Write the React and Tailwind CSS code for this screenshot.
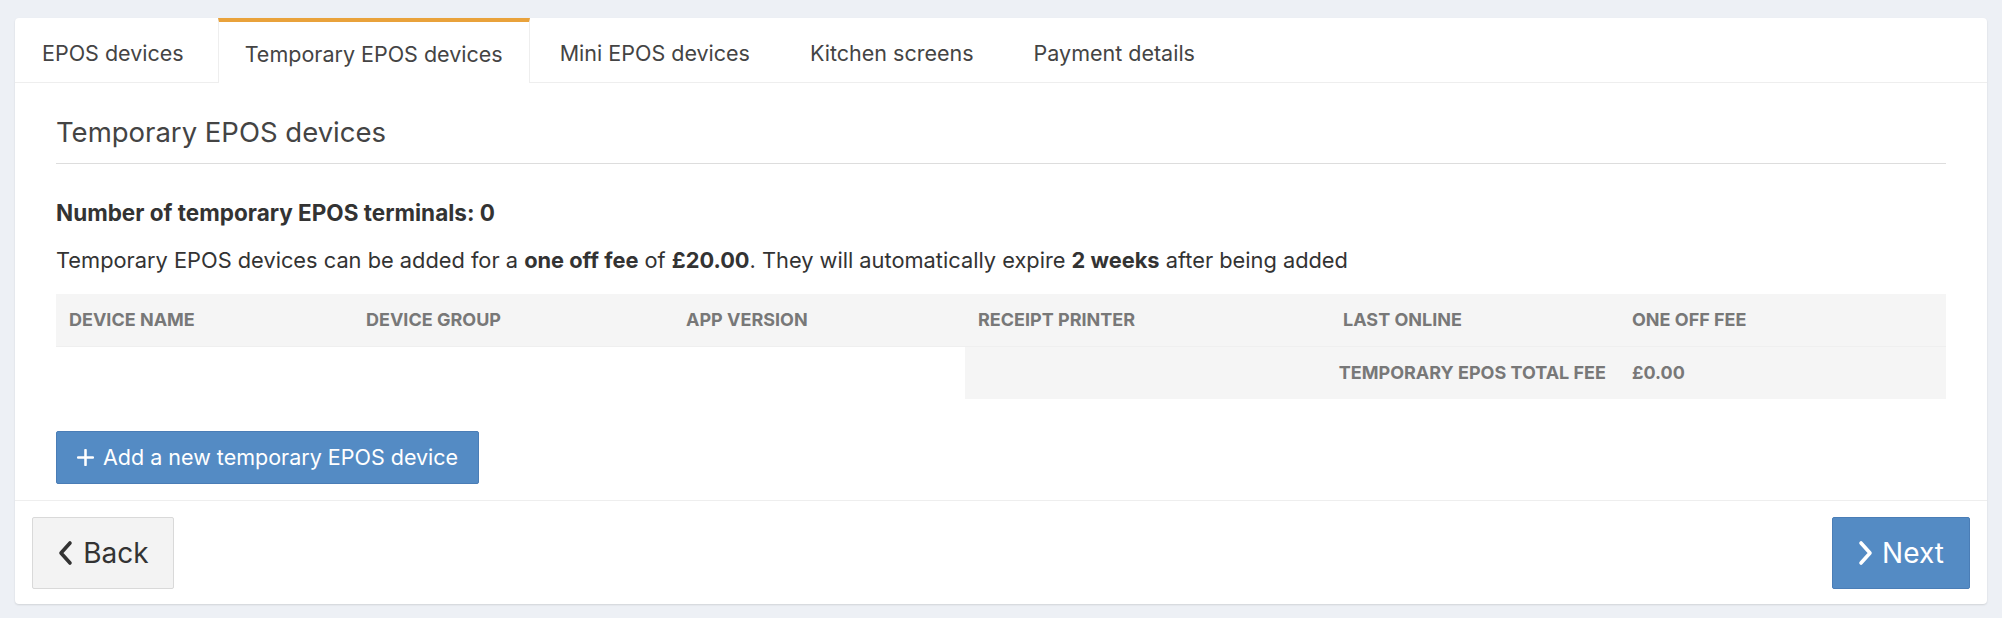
import React from 'react';

const tabs = ['EPOS devices', 'Temporary EPOS devices', 'Mini EPOS devices', 'Kitchen screens', 'Payment details'];

const columns = [
    { label: 'Device name', width: 'w-[297px]' },
    { label: 'Device group', width: 'w-[320px]' },
    { label: 'App version', width: 'w-[292px]' },
    { label: 'Receipt printer', width: 'w-[365px]' },
    { label: 'Last online', width: 'w-[289px]' },
    { label: 'One off fee', width: '' },
];

function ChevronLeft() {
    return (
        <svg width="16" height="26" viewBox="0 0 16 26" fill="none">
            <path d="M13 3 L4 13 L13 23" stroke="currentColor" strokeWidth="3.6" strokeLinecap="round" strokeLinejoin="round" />
        </svg>
    );
}

function ChevronRight() {
    return (
        <svg width="16" height="26" viewBox="0 0 16 26" fill="none">
            <path d="M3 3 L12 13 L3 23" stroke="currentColor" strokeWidth="3.6" strokeLinecap="round" strokeLinejoin="round" />
        </svg>
    );
}

function PlusIcon() {
    return (
        <svg width="17" height="17" viewBox="0 0 16 16" fill="none">
            <path d="M8 1 V15 M1 8 H15" stroke="currentColor" strokeWidth="2.4" strokeLinecap="round" />
        </svg>
    );
}

export default function App() {
    return (
        <div className="min-h-[618px] bg-[#edf0f5] px-[15px] pt-[18px] pb-[15px] font-['Inter','Liberation_Sans',sans-serif] text-[#444]">
            <div className="bg-white rounded-[4px] shadow-[0_1px_2px_rgba(0,0,0,0.12)]">
                {/* tabs */}
                <div className="flex h-[65px] border-b border-[#eeeeee]">
                    {tabs.map((tab, idx) => {
                        const active = idx === 1;
                        return (
                            <div
                                key={tab}
                                className={
                                    active
                                        ? 'relative -mb-px flex items-center px-[26px] pt-[3px] bg-white border-x border-[#eeeeee] border-t-4 border-t-[#e9a23b] text-[21.5px] text-[#444]'
                                        : idx === 0
                                            ? 'flex items-center pl-[27px] pr-[34px] pt-[7px] text-[21.5px] text-[#444]'
                                            : 'flex items-center px-[30px] pt-[7px] text-[21.5px] text-[#444]'
                                }
                            >
                                {tab}
                            </div>
                        );
                    })}
                </div>

                {/* body */}
                <div className="px-[41px] pt-[33px]">
                    <h2 className="text-[27.5px] leading-[32px] text-[#444] pb-[15px] border-b border-[#dddddd]">Temporary EPOS devices</h2>

                    <p className="mt-[35px] text-[22.5px] leading-[28px] font-bold text-[#333]">Number of temporary EPOS terminals: 0</p>
                    <p className="mt-[19px] text-[21.8px] leading-[28px] text-[#333]">
                        Temporary EPOS devices can be added for a <span className="font-bold">one off fee</span> of <span className="font-bold">£20.00</span>. They will automatically expire <span className="font-bold">2 weeks</span> after being added
                    </p>

                    <table className="mt-[20px] w-full border-collapse text-[18px] font-bold uppercase text-[#787878]">
                        <thead>
                            <tr className="bg-[#f5f5f5] h-[52px] border-b border-[#efefef]">
                                {columns.map((col) => (
                                    <th key={col.label} className={`${col.width} px-[13px] text-left font-bold`}>
                                        {col.label}
                                    </th>
                                ))}
                            </tr>
                        </thead>
                        <tfoot>
                            <tr className="h-[53px]">
                                <td colSpan={3}></td>
                                <td colSpan={2} className="bg-[#f5f5f5] px-[13px] text-right">Temporary EPOS total fee</td>
                                <td className="bg-[#f5f5f5] px-[13px]">£0.00</td>
                            </tr>
                        </tfoot>
                    </table>

                    <button className="mt-[32px] flex h-[53px] items-center gap-[9px] rounded-[2px] border border-[#4a7db6] bg-[#548bc4] px-[20px] text-[21.5px] text-white">
                        <PlusIcon />
                        Add a new temporary EPOS device
                    </button>
                    <div className="h-[16px]"></div>
                </div>

                {/* footer */}
                <div className="flex items-center justify-between border-t border-[#eeeeee] px-[17px] pt-[16px] pb-[15px]">
                    <button className="flex h-[72px] w-[142px] items-center justify-center gap-[10px] rounded-[2px] border border-[#d9d9d9] bg-[#f3f3f3] text-[28px] text-[#333]">
                        <ChevronLeft />
                        Back
                    </button>
                    <button className="flex h-[72px] w-[138px] items-center justify-center gap-[8px] rounded-[2px] border border-[#4a7db6] bg-[#548bc4] text-[28px] text-white">
                        <ChevronRight />
                        Next
                    </button>
                </div>
            </div>
        </div>
    );
}
